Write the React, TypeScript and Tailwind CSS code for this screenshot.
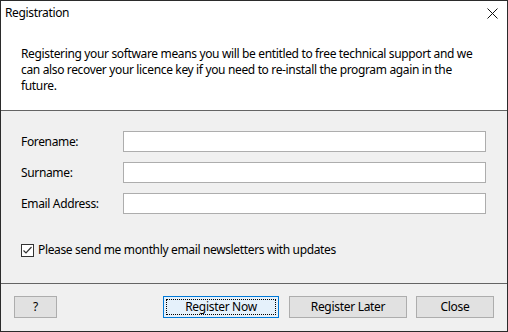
const FIELDS = ['Forename:', 'Surname:', 'Email Address:'];

function Btn({ label, primary, className }: { label: string; primary?: boolean; className: string }) {
  if (primary) {
    return (
      <button
        className={`flex h-[22px] items-center justify-center border border-[#0078d7] bg-[#e5f1fb] p-[2px] text-[12px] tracking-[-0.3px] text-black ${className}`}
      >
        <span className="flex h-full w-full items-center justify-center border border-dotted border-black">
          {label}
        </span>
      </button>
    );
  }
  return (
    <button
      className={`flex h-[22px] items-center justify-center border border-[#adadad] bg-[#e1e1e1] text-[12px] tracking-[-0.3px] text-black ${className}`}
    >
      {label}
    </button>
  );
}

export default function App() {
  return (
    <div
      className="flex h-[332px] w-[508px] flex-col border border-[#2b2b2b] bg-[#f0f0f0] text-black tracking-[-0.35px]"
      style={{ fontFamily: '"Noto Sans", "Open Sans", sans-serif' }}
    >
      {/* title bar + header */}
      <div className="flex h-[110px] flex-col border-b border-[#646464] bg-white">
        <div className="flex h-[24px] items-center justify-between pl-[4px] pr-[9px]">
          <span className="text-[12px] leading-none">Registration</span>
          <svg width="11" height="11" viewBox="0 0 11 11" className="mt-[1px]">
            <path d="M0.5 0.5 L10.5 10.5 M10.5 0.5 L0.5 10.5" stroke="#111" strokeWidth="1" />
          </svg>
        </div>
        <p className="mt-[21px] pl-[20px] pr-[30px] text-[12px] leading-[16px]">
          Registering your software means you will be entitled to free technical support and we can
          also recover your licence key if you need to re-install the program again in the future.
        </p>
      </div>

      {/* form */}
      <div className="flex flex-col gap-[10px] pl-[20px] pr-[21px] pt-[20px]">
        {FIELDS.map((f) => (
          <div key={f} className="flex h-[21px] items-center">
            <span className="w-[102px] text-[12px]">{f}</span>
            <div className="h-[21px] flex-1 border border-[#adadad] bg-white" />
          </div>
        ))}
      </div>

      <div className="mt-[27px] flex items-center gap-[4px] pl-[20px]">
        <div className="flex h-[13px] w-[13px] items-center justify-center border border-[#333] bg-white">
          <svg width="11" height="11" viewBox="0 0 11 11">
            <path d="M1.5 5.5 L4 8 L9.5 2" fill="none" stroke="#333" strokeWidth="1.2" />
          </svg>
        </div>
        <span className="text-[12px]">Please send me monthly email newsletters with updates</span>
      </div>

      {/* footer */}
      <div className="mt-[24px] flex flex-1 border-t border-[#646464] pl-[13px] pt-[12px]">
        <Btn label="?" className="w-[43px]" />
        <Btn label="Register Now" primary className="ml-[106px] w-[116px]" />
        <Btn label="Register Later" className="ml-[10px] w-[118px]" />
        <Btn label="Close" className="ml-[9px] w-[78px]" />
      </div>
    </div>
  );
}
